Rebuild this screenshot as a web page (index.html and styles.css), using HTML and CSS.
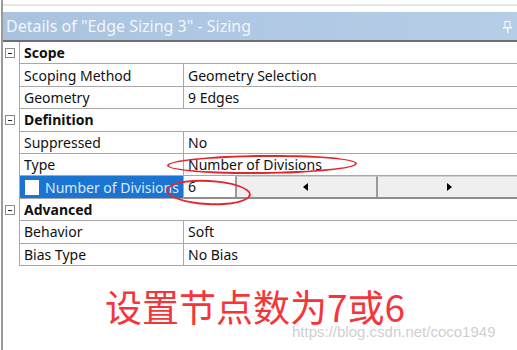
FILE: index.html
```html
<!DOCTYPE html>
<html lang="zh">
<head>
    <meta charset="UTF-8">
    <meta name="viewport" content="width=device-width, initial-scale=1.0">
    <title>Details of "Edge Sizing 3" - Sizing</title>
    <link rel="stylesheet" href="styles.css">
</head>
<body>
    <div class="panel">
        <div class="top-strip"></div>

        <!-- Tajuk panel -->
        <div class="title-bar">
            <span class="title-text">Details of "Edge Sizing 3" - Sizing</span>
            <svg class="pin" width="9" height="12" viewBox="0 0 9 12">
                <rect x="2" y="0.5" width="5" height="6" fill="none" stroke="#fff" stroke-width="1"/>
                <rect x="0" y="6" width="9" height="1.4" fill="#fff"/>
                <rect x="4" y="7" width="1.2" height="5" fill="#fff"/>
            </svg>
        </div>

        <!-- Grid butiran -->
        <div class="grid">
            <div class="row group">
                <div class="exp"><span class="minus-box"></span></div>
                <div class="group-name">Scope</div>
            </div>
            <div class="row">
                <div class="exp"></div>
                <div class="name">Scoping Method</div>
                <div class="value">Geometry Selection</div>
            </div>
            <div class="row">
                <div class="exp"></div>
                <div class="name">Geometry</div>
                <div class="value">9 Edges</div>
            </div>

            <div class="row group">
                <div class="exp"><span class="minus-box"></span></div>
                <div class="group-name">Definition</div>
            </div>
            <div class="row">
                <div class="exp"></div>
                <div class="name">Suppressed</div>
                <div class="value">No</div>
            </div>
            <div class="row">
                <div class="exp"></div>
                <div class="name">Type</div>
                <div class="value">Number of Divisions</div>
            </div>
            <div class="row">
                <div class="exp"></div>
                <div class="name selected"><span class="check"></span>Number of Divisions</div>
                <div class="value spinner">
                    <div class="num-input">6</div>
                    <div class="spin-btn"><span class="arrow-left"></span></div>
                    <div class="spin-btn"><span class="arrow-right"></span></div>
                </div>
            </div>

            <div class="row group">
                <div class="exp"><span class="minus-box"></span></div>
                <div class="group-name">Advanced</div>
            </div>
            <div class="row">
                <div class="exp"></div>
                <div class="name">Behavior</div>
                <div class="value">Soft</div>
            </div>
            <div class="row">
                <div class="exp"></div>
                <div class="name">Bias Type</div>
                <div class="value">No Bias</div>
            </div>
        </div>

        <div class="caption">设置节点数为7或6</div>
    </div>

    <!-- Tanda merah -->
    <div class="mark mark-type"></div>
    <div class="mark mark-num"></div>

    <div class="watermark">https://blog.csdn.net/coco1949</div>
</body>
</html>
```

FILE: styles.css
```css
body {
    margin: 0;
    width: 517px;
    height: 350px;
    overflow: hidden;
    background: #fff;
    font-family: "Noto Sans", "Open Sans", sans-serif;
    font-size: 14px;
    color: #111;
    position: relative;
}

.panel {
    margin-left: 1px;
    border-left: 2px solid #9a9a9a;
    height: 350px;
}

.top-strip {
    height: 4px;
    border-bottom: 2px solid #e6e6e6;
    margin-bottom: 6px;
}

/* Tajuk */
.title-bar {
    height: 28px;
    background: linear-gradient(to right, #a9c3df, #b6cde7);
    border-bottom: 2px solid #6f6f6f;
    display: flex;
    align-items: center;
    justify-content: space-between;
    padding: 0 5px 0 3px;
}

.title-text {
    color: #f3f6fa;
    font-size: 16px;
}

.pin {
    margin-top: 2px;
}

/* Grid */
.row {
    display: grid;
    grid-template-columns: 17px 164px 1fr;
    height: 22.4px;
}

.exp {
    border-right: 1px solid #a8a8a8;
    display: flex;
    align-items: center;
    padding-left: 2px;
}

.minus-box {
    width: 10px;
    height: 10px;
    box-sizing: border-box;
    border: 1px solid #8c8c8c;
    position: relative;
    background: #fff;
}

.minus-box::after {
    content: "";
    position: absolute;
    left: 2px;
    right: 2px;
    top: 4px;
    height: 1px;
    background: #222;
}

.group-name {
    grid-column: 2 / 4;
    font-weight: bold;
    padding-left: 4px;
    border-bottom: 1px solid #a8a8a8;
    display: flex;
    align-items: center;
}

.name, .value {
    border-bottom: 1px solid #a8a8a8;
    display: flex;
    align-items: center;
    padding-left: 4px;
    white-space: nowrap;
}

.name {
    border-right: 1px solid #a8a8a8;
}

.name.selected {
    background: #1a74d2;
    color: #dbe9f8;
    padding-left: 5px;
    overflow: hidden;
}

.check {
    width: 14px;
    height: 15px;
    background: #fff;
    margin-right: 6px;
    flex-shrink: 0;
}

.value.spinner {
    padding-left: 0;
    border-bottom: 2px solid #8e8e8e;
}

.num-input {
    width: 51px;
    box-sizing: border-box;
    height: 100%;
    background: #fff;
    padding-left: 4px;
    display: flex;
    align-items: center;
}

.spin-btn {
    flex: 1;
    height: 100%;
    box-sizing: border-box;
    background: #efefef;
    border-top: 1px solid #d0d0d0;
    border-left: 2px solid #9a9a9a;
    display: flex;
    align-items: center;
    justify-content: center;
}

.arrow-left {
    width: 0;
    height: 0;
    border-top: 4px solid transparent;
    border-bottom: 4px solid transparent;
    border-right: 5px solid #000;
    margin-left: -2px;
}

.arrow-right {
    width: 0;
    height: 0;
    border-top: 4px solid transparent;
    border-bottom: 4px solid transparent;
    border-left: 5px solid #000;
    margin-left: 4px;
}

/* Keterangan */
.caption {
    padding: 18px 0 0 102px;
    font-family: "Noto Sans CJK SC", sans-serif;
    font-size: 37px;
    line-height: 44px;
    color: #f4363a;
}

.mark {
    position: absolute;
    border: 2px solid #e4262c;
    border-radius: 50%;
}

.mark-type {
    left: 167px;
    top: 155px;
    width: 186px;
    height: 15px;
    transform: rotate(-0.6deg);
}

.mark-num {
    left: 166px;
    top: 180px;
    width: 81px;
    height: 21px;
    transform: rotate(3deg);
}

.watermark {
    position: absolute;
    left: 292px;
    top: 323px;
    font-family: "Liberation Sans", Arial, sans-serif;
    font-size: 15px;
    color: #cfcfcf;
}
```
